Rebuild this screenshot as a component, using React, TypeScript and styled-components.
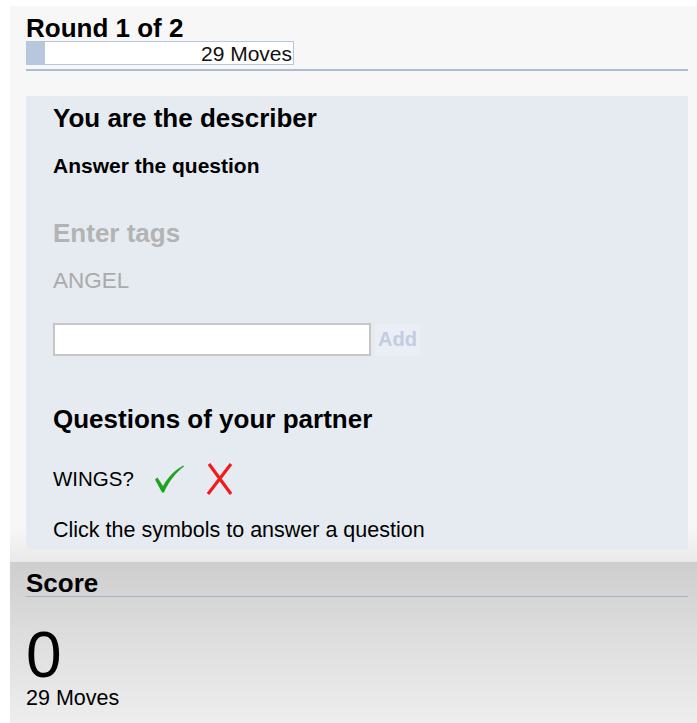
import React from 'react';
import styled, { createGlobalStyle } from 'styled-components';

const GlobalStyle = createGlobalStyle`
  html, body {
    margin: 0;
    padding: 0;
    background: #ffffff;
    font-family: "Liberation Sans", Arial, sans-serif;
    color: #000;
  }
`;

const Page = styled.div`
  padding-top: 6px;
  padding-left: 10px;
`;

const GamePanel = styled.div`
  background: linear-gradient(#f7f7f7 calc(100% - 34px), #e9e9e9);
  padding: 10px 9px 13px 16px;
`;

const RoundHeader = styled.div`
  padding-bottom: 4px;
  border-bottom: 2px solid #aebdd2;
`;

const Title = styled.h2<{ $muted?: boolean }>`
  margin: 0;
  font-size: 26px;
  line-height: 30px;
  font-weight: bold;
  color: ${(p) => (p.$muted ? '#b3b3b3' : '#000')};
`;

const RoundTitle = styled(Title)`
  line-height: 25px;
`;

const MovesBar = styled.div`
  position: relative;
  width: 266px;
  height: 22px;
  border: 1px solid #b4c5dc;
  background: #ffffff;
`;

const MovesFill = styled.div`
  height: 100%;
  background: #b7c8de;
`;

const MovesLabel = styled.span`
  position: absolute;
  right: 1px;
  top: 0;
  font-size: 21px;
  line-height: 23px;
  color: #111;
`;

const DescriberCard = styled.section`
  margin-top: 25px;
  background: #e6ebf2;
  padding: 7px 27px 7px 27px;
`;

const Lead = styled.p`
  margin: 21px 0 0;
  font-size: 21px;
  line-height: 24px;
  font-weight: bold;
`;

const Spaced = styled.div<{ $gap: number }>`
  margin-top: ${(p) => p.$gap}px;
`;

const TagWord = styled.div`
  margin-top: 20px;
  font-size: 22.5px;
  line-height: 26px;
  color: #ababab;
`;

const TagForm = styled.form`
  margin-top: 29px;
  display: flex;
  align-items: center;
  gap: 4px;
`;

const TagInput = styled.input`
  box-sizing: border-box;
  width: 318px;
  height: 33px;
  margin: 0;
  border: 2px solid #c6c6c6;
  background: #fff;
  outline: none;
`;

const AddButton = styled.button`
  height: 32px;
  padding: 0 3px;
  border: none;
  background: #ebeef4;
  font-family: inherit;
  font-size: 20px;
  font-weight: bold;
  color: #c2cde2;
`;

const QuestionRow = styled.div`
  margin-top: 29px;
  height: 32px;
  display: flex;
  align-items: center;
`;

const QuestionText = styled.span`
  font-size: 20.5px;
  line-height: 24px;
  margin-right: 19px;
`;

const AnswerIcon = styled.svg`
  display: block;
  cursor: pointer;
`;

const Hint = styled.p`
  margin: 23px 0 0;
  font-size: 21.5px;
  line-height: 24px;
`;

const ScorePanel = styled.section`
  height: 160px;
  background: linear-gradient(#cecece, #dcdcdc 40%, #efefef);
  padding: 8px 9px 0 16px;
`;

const ScoreTitle = styled(Title)`
  line-height: 26px;
  border-bottom: 1px solid #a4b4cc;
`;

const ScoreValue = styled.div`
  margin-top: 32px;
  font-size: 64px;
  line-height: 52px;
`;

const ScoreMoves = styled.div`
  margin-top: 6px;
  font-size: 21.5px;
  line-height: 22px;
`;

const CheckIcon = () => (
  <AnswerIcon width="32" height="30" viewBox="0 0 32 30">
    <path
      d="M2 15.5 L4.5 13.5 L10 22 C15 13 22 6 30.5 1.5 L31 2.5 C23 8.5 16 17 11 28.5 L9 28.5 Z"
      fill="#1ea31e"
    />
  </AnswerIcon>
);

const CrossIcon = () => (
  <AnswerIcon width="28" height="32" viewBox="0 0 28 32" style={{ marginLeft: 21 }}>
    <path d="M3 1 L25 31 M25 1 L2 31" stroke="#f01c1c" strokeWidth="3.2" fill="none" />
  </AnswerIcon>
);

const totalMoves = 29;
const usedMoves = 2;

export default function App() {
  return (
    <Page>
      <GlobalStyle />
      <GamePanel>
        <RoundHeader>
          <RoundTitle>Round 1 of 2</RoundTitle>
          <MovesBar>
            <MovesFill style={{ width: `${(usedMoves / totalMoves) * 100}%` }} />
            <MovesLabel>{totalMoves} Moves</MovesLabel>
          </MovesBar>
        </RoundHeader>

        <DescriberCard>
          <Title>You are the describer</Title>
          <Lead>Answer the question</Lead>

          <Spaced $gap={40}>
            <Title $muted>Enter tags</Title>
          </Spaced>
          <TagWord>ANGEL</TagWord>
          <TagForm onSubmit={(e) => e.preventDefault()}>
            <TagInput type="text" disabled />
            <AddButton type="submit" disabled>
              Add
            </AddButton>
          </TagForm>

          <Spaced $gap={48}>
            <Title>Questions of your partner</Title>
          </Spaced>
          <QuestionRow>
            <QuestionText>WINGS?</QuestionText>
            <CheckIcon />
            <CrossIcon />
          </QuestionRow>
          <Hint>Click the symbols to answer a question</Hint>
        </DescriberCard>
      </GamePanel>

      <ScorePanel>
        <ScoreTitle>Score</ScoreTitle>
        <ScoreValue>0</ScoreValue>
        <ScoreMoves>{totalMoves} Moves</ScoreMoves>
      </ScorePanel>
    </Page>
  );
}
